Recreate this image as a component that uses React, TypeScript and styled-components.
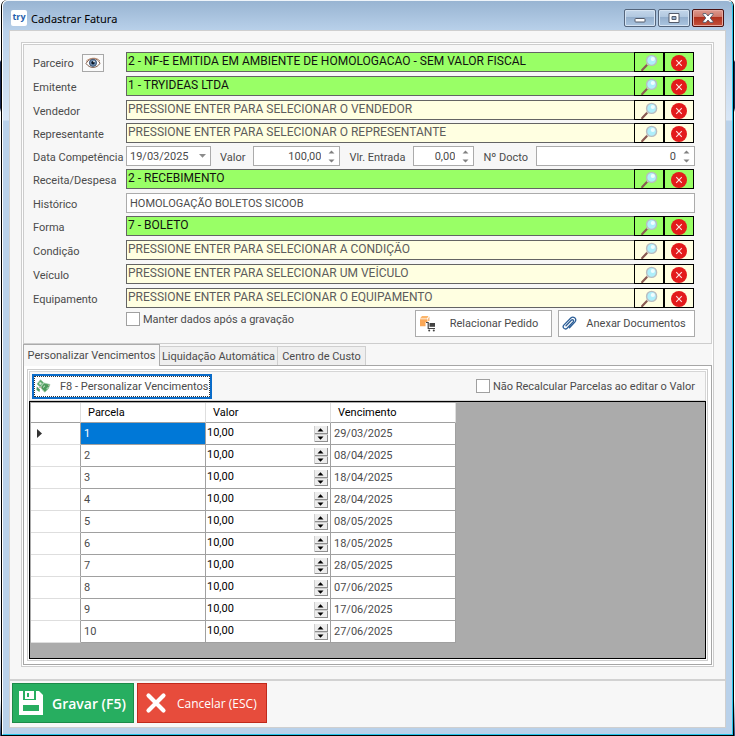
import React, { useState } from "react";
import styled, { createGlobalStyle, css } from "styled-components";

const GlobalStyle = createGlobalStyle`
  *, *::before, *::after { box-sizing: border-box; }
  body {
    margin: 0;
    background: linear-gradient(#ffffff 0, #ffffff 60px, #16264e 62px, #16264e 108px, #ffffff 112px, #ffffff 700px, #2f4f80 734px);
    font-family: Roboto, "Liberation Sans", sans-serif;
    font-size: 11px;
    color: #4b4b4b;
  }
  button, input { font: inherit; color: inherit; margin: 0; padding: 0; }
`;

/* ---------- window ---------- */

const Desktop = styled.div`
  min-height: 100vh;
  padding: 0 1px 1px;
  display: flex;
`;

const Frame = styled.div`
  flex: 1;
  min-width: 0;
  display: flex;
  border: solid #000;
  border-width: 0 1px 1px;
  border-radius: 6px 6px 0 0;
  overflow: hidden;
`;

const FrameInner = styled.div`
  flex: 1;
  min-width: 0;
  display: flex;
  flex-direction: column;
  padding: 0 6px 6px;
  border: 1px solid #25c3ea;
  border-top-color: #eef4fa;
  border-left-color: #ffffff;
  border-radius: 6px 6px 0 0;
  background: linear-gradient(#98b4d2 0, #b9d1ea 30px, #d8e6f6 119px, #b9d1ea 120px);
`;

const TitleBar = styled.header`
  height: 29px;
  flex: none;
  display: flex;
  align-items: flex-start;
  padding-left: 2px;
`;

const AppBadge = styled.span`
  width: 16px;
  height: 16px;
  margin-top: 9px;
  border-radius: 2px;
  background: #fff;
  color: #1f5fae;
  font: 700 9px/14px "Open Sans", sans-serif;
  text-align: center;
`;

const Title = styled.h1`
  flex: 1;
  margin: 9px 0 0 4px;
  font: 400 11px/18px "Noto Sans", sans-serif;
  color: #000;
`;

const CaptionButtons = styled.div`
  display: flex;
  gap: 2px;
  margin: 8px 2px 0 0;
`;

const CaptionButton = styled.button<{ $close?: boolean }>`
  width: 32px;
  height: 18px;
  display: grid;
  place-items: center;
  border: 1px solid ${(p) => (p.$close ? "#4a1212" : "#54657c")};
  border-radius: 2px;
  box-shadow: inset 0 0 0 1px ${(p) => (p.$close ? "#e7a99f" : "#d5e3f2")};
  background: ${(p) =>
    p.$close
      ? "linear-gradient(#dd9a8f 0, #cd7566 45%, #b0301c 46%, #c4523d 100%)"
      : "linear-gradient(#c3d6ea 0, #b0c7df 45%, #94afcd 46%, #abc5e0 100%)"};
`;

const Client = styled.main`
  flex: 1;
  display: flex;
  flex-direction: column;
  border: 1px solid #cfcfcf;
  background: #f7f7f7;
`;

const Group = styled.section`
  flex: 1;
  display: flex;
  flex-direction: column;
  margin: 11px 11px 12px;
  padding: 1px;
  border: 1px solid #cdcdcd;
  background: #fff;
`;

/* ---------- form ---------- */

const Form = styled.form`
  padding: 7px 16px 6px 9px;
  border: 1px solid #cdcdcd;
  background: #f7f7f7;
`;

const Row = styled.div<{ $tight?: boolean }>`
  height: 20px;
  margin-bottom: ${(p) => (p.$tight ? 3 : 4)}px;
  display: flex;
  align-items: center;
`;

const LabelCell = styled.div`
  flex: none;
  width: 93px;
  height: 20px;
  display: flex;
  align-items: center;
  gap: 8px;
  padding-top: 2px;
  white-space: nowrap;
`;

const InlineLabel = styled.label`
  flex: none;
  padding: 2px 8px 0 9px;
  white-space: nowrap;
`;

const EyeButton = styled.button`
  width: 22px;
  height: 18px;
  display: grid;
  place-items: center;
  border: 1px solid #a8a8a8;
  background: #fafafa;
`;

const Lookup = styled.div<{ $filled?: boolean }>`
  flex: 1;
  min-width: 0;
  height: 20px;
  display: flex;
  margin-right: 1px;
  background: ${(p) => (p.$filled ? "#99ff66" : "#ffffe1")};
  color: ${(p) => (p.$filled ? "#111" : "#5c5c5c")};
`;

const LookupInput = styled.input`
  flex: 1;
  min-width: 0;
  padding: 0 1px 3px;
  border: 1px solid #646464;
  border-right: 0;
  background: transparent;
  font-size: 12px;
  outline: none;
  &::placeholder { color: #5c5c5c; opacity: 1; }
`;

const LookupButton = styled.button`
  flex: none;
  width: 30px;
  display: flex;
  align-items: flex-end;
  justify-content: center;
  border: 1px solid #000;
  background: transparent;
`;

const TextInput = styled.input`
  flex: 1;
  min-width: 0;
  height: 20px;
  padding: 0 3px;
  border: 1px solid #ababab;
  background: #fff;
  outline: none;
`;

const Box = styled.div<{ $width?: number }>`
  ${(p) => (p.$width ? css`flex: none; width: ${p.$width}px;` : css`flex: 1; min-width: 0;`)}
  height: 20px;
  display: flex;
  border: 1px solid #ababab;
  background: #fff;
`;

const BoxInput = styled.input<{ $right?: boolean }>`
  flex: 1;
  min-width: 0;
  width: 0;
  padding: 0 3px;
  border: 0;
  background: transparent;
  text-align: ${(p) => (p.$right ? "right" : "left")};
  outline: none;
`;

const BoxButton = styled.button`
  flex: none;
  width: 15px;
  display: grid;
  place-items: center;
  border: 0;
  background: transparent;
`;

const FormFooter = styled.div`
  display: flex;
  gap: 6px;
  margin: -2px 0 0 93px;
`;

const Check = styled.label`
  display: flex;
  align-items: center;
  gap: 3px;
  white-space: nowrap;
`;

const CheckBox = styled.input`
  appearance: none;
  width: 14px;
  height: 14px;
  border: 1px solid #a0a0a0;
  background: #fff;
  &:checked { box-shadow: inset 0 0 0 3px #fff; background: #555; }
`;

const FooterCheck = styled(Check)`
  flex: 1;
  height: 18px;
`;

const ActionButton = styled.button`
  width: 137px;
  height: 27px;
  display: flex;
  align-items: center;
  border: 1px solid #ababab;
  background: #fff;
  padding: 0 3px;
  svg { flex: none; }
  span { flex: 1; text-align: center; white-space: nowrap; padding-left: 4px; }
`;

/* ---------- tabs ---------- */

const TabList = styled.div`
  display: flex;
  align-items: flex-end;
  background: #f7f7f7;
`;

const Tab = styled.button<{ $active?: boolean; $width: number }>`
  width: ${(p) => p.$width}px;
  border: 1px solid #cfcfcf;
  border-bottom: 0;
  white-space: nowrap;
  ${(p) =>
    p.$active
      ? css`height: 22px; margin-bottom: -1px; position: relative; background: #f7f7f7; border-color: #ababab;`
      : css`height: 19px; border-left: 0; background: #efefef;`}
`;

const TabPage = styled.div`
  flex: 1;
  display: flex;
  flex-direction: column;
  padding: 3px;
  border: 1px solid #a6a6a6;
`;

const Panel = styled.div`
  flex: 1;
  display: flex;
  flex-direction: column;
  padding: 1px;
  border: 1px solid #cdcdcd;
`;

const Toolbar = styled.div`
  height: 30px;
  display: flex;
  align-items: center;
  justify-content: space-between;
  padding: 0 10px 0 2px;
  border: 1px solid #d6d6d6;
  background: #f7f7f7;
`;

const FocusButton = styled.button`
  width: 180px;
  height: 25px;
  display: flex;
  align-items: center;
  gap: 9px;
  padding: 0 2px;
  border: 2px solid #0a6cc9;
  outline: 1px dotted #333;
  outline-offset: -3px;
  background: #fff;
  white-space: nowrap;
  svg { flex: none; }
`;

/* ---------- grid ---------- */

const GridArea = styled.div`
  flex: 1;
  min-height: 258px;
  padding: 1px;
  border: 1px solid #000;
  background: #ababab;
`;

const Table = styled.table`
  width: 425px;
  table-layout: fixed;
  border-collapse: separate;
  border-spacing: 0;
  background: #fff;
`;

const HeadCell = styled.th<{ $width: number }>`
  width: ${(p) => p.$width}px;
  height: 20px;
  padding: 0 7px;
  border-right: 1px solid #dedede;
  border-bottom: 1px solid #a0a0a0;
  color: #000;
  font-weight: 400;
  text-align: left;
`;

const MarkerCell = styled.th`
  height: 22px;
  padding: 0 0 0 6px;
  border-right: 1px solid #a0a0a0;
  border-bottom: 1px solid #dedede;
  text-align: left;
  svg { display: block; }
`;

const Cell = styled.td<{ $selected?: boolean }>`
  height: 22px;
  padding: 0 3px;
  border-right: 1px solid #a0a0a0;
  border-bottom: 1px solid #a0a0a0;
  ${(p) => p.$selected && css`background: #0078d7; color: #fff;`}
`;

const ValueBox = styled.div`
  height: 19px;
  display: flex;
  margin: 0 -1px 0 -2px;
`;

const ValueInput = styled.input`
  flex: 1;
  min-width: 0;
  padding-bottom: 3px;
  border: 0;
  color: #000;
  outline: none;
`;

const MiniSpin = styled.button`
  align-self: center;
  width: 14px;
  height: 16px;
  border: 0;
  background: #ededed;
  svg { display: block; }
`;

/* ---------- bottom bar ---------- */

const BottomBar = styled.footer`
  display: flex;
  gap: 3px;
  padding: 2px 2px 4px;
  border-top: 2px solid #d2d2d2;
`;

const BigButton = styled.button<{ $danger?: boolean }>`
  height: 40px;
  width: ${(p) => (p.$danger ? 130 : 122)}px;
  display: flex;
  align-items: center;
  gap: 9px;
  padding: 0 6px;
  border: 1px solid ${(p) => (p.$danger ? "#c0291b" : "#1c8a48")};
  background: ${(p) => (p.$danger ? "#e74c3c" : "#27ae60")};
  color: #fff;
  font: ${(p) => (p.$danger ? "400 12px" : "600 14px")} "Open Sans", sans-serif;
  white-space: nowrap;
`;

/* ---------- icons ---------- */

const MagnifierIcon = () => (
  <svg width="17" height="17" viewBox="0 0 17 17" aria-hidden="true">
    <path d="M1.2 16 6.4 10.6" stroke="#8a5a52" strokeWidth="2.2" strokeLinecap="round" />
    <path d="M6 11 7.5 9.5" stroke="#c9c9c9" strokeWidth="1.4" />
    <circle cx="10.6" cy="6.4" r="5" fill="#aeeffb" stroke="#b9bdc0" strokeWidth="1.4" />
    <circle cx="11.8" cy="5" r="2.1" fill="#effdff" />
  </svg>
);

const ClearIcon = () => (
  <svg width="16" height="16" viewBox="0 0 16 16" aria-hidden="true">
    <circle cx="8" cy="8" r="8" fill="#e31b1b" />
    <path d="M5.2 5.2 10.8 10.8M10.8 5.2 5.2 10.8" stroke="#ffe3e3" strokeWidth="1.1" />
  </svg>
);

const EyeIcon = () => (
  <svg width="16" height="12" viewBox="0 0 16 12" aria-hidden="true">
    <path d="M1 6.5C3.5 2.5 6 1.6 8.4 1.6c3 0 5 1.6 6.6 4.6-1.700 2.900-4 4.200-7 4.200-2.800 0-5-1.300-7-3.900Z" fill="#fff" stroke="#7d5a48" strokeWidth="1" />
    <path d="M1 4.500C4 .8 11.500-.3 15 4" fill="none" stroke="#b98a70" strokeWidth="1" />
    <circle cx="8" cy="5.800" r="3.600" fill="#6f8fb3" stroke="#2a3f5c" strokeWidth=".8" />
    <circle cx="8" cy="5.800" r="1.700" fill="#0d1726" />
    <circle cx="9" cy="4.600" r=".8" fill="#fff" />
  </svg>
);

const SpinIcon = () => (
  <svg width="7" height="13" viewBox="0 0 7 13" aria-hidden="true">
    <path d="M.5 3.500 3.500.5l3 3ZM.5 9.500l3 3 3-3Z" fill="#808080" />
  </svg>
);

const DropIcon = () => (
  <svg width="7" height="4" viewBox="0 0 7 4" aria-hidden="true">
    <path d="M0 0h7L3.500 3.800Z" fill="#8c8c8c" />
  </svg>
);

const MiniSpinIcon = () => (
  <svg width="14" height="16" viewBox="0 0 14 16" aria-hidden="true">
    <path d="M0 7.500h14M0 15.500h14M13.500 0v16" stroke="#8f8f8f" />
    <path d="M.5 0v16M0 8.500h14" stroke="#cfcfcf" />
    <path d="M3.500 5.500h6L6.500 2.200ZM3.500 10.500h6L6.500 13.800Z" fill="#000" />
  </svg>
);

const OrderIcon = () => (
  <svg width="17" height="17" viewBox="0 0 17 17" aria-hidden="true">
    <path d="M1 3.500 3 1h6.500L8 3.500Z" fill="#fbb56b" />
    <path d="M9 3.500 10.500 1.500V6H9Z" fill="#f7b87c" />
    <path d="M1 4.300h7.500V7H6.500v4.200H1Z" fill="#fba857" />
    <path d="M7 7.500h2.200v6H16" fill="none" stroke="#444" strokeWidth="1.200" />
    <path d="M10.500 8H16v3.800h-5.500Z" fill="#444" />
    <circle cx="10.200" cy="15.500" r="1" fill="#444" />
    <circle cx="14.800" cy="15.500" r="1" fill="#444" />
  </svg>
);

const ClipIcon = () => (
  <svg width="15" height="15" viewBox="0 0 15 15" fill="none" stroke="#2d5f98" strokeWidth="1.300" strokeLinecap="round" aria-hidden="true">
    <path d="M4 9.800 9.300 4.300c1.400-1.300 3 .2 1.800 1.600l-6 6.300c-2 2-5.300-.5-3.300-3.100L8.800 2c2.500-2.300 6.500.6 4.200 3.900L7.500 11.800" />
  </svg>
);

const MoneyIcon = () => (
  <svg width="15" height="14" viewBox="0 0 15 14" aria-hidden="true">
    <path d="M1 5 4.500.8 7.500 3.500 4.200 8Z" fill="#58a869" stroke="#8fbf98" strokeWidth=".7" />
    <path d="M.8 7.500 4 10.500 3.500 13 .5 11Z" fill="#4f9a60" />
    <path d="M4.500 8.500 8 4l6 1.500-1.800 4.500-3.400 3.200Z" fill="#4d9b5d" stroke="#9ccaa4" strokeWidth=".7" />
    <circle cx="4.400" cy="4.500" r="1.200" fill="#d7ecd9" />
    <path d="m7 8.500 2-1.800M10.500 9.800l1.800-1.300M6 11l2 1.800" stroke="#d5ead8" strokeWidth="1" />
    <path d="m2.500 9 2-1 1.500 1.200M12 6l1 1" stroke="#d8a1a5" strokeWidth=".8" fill="none" />
  </svg>
);

const SaveIcon = () => (
  <svg width="24" height="24" viewBox="0 0 24 24" aria-hidden="true">
    <path fillRule="evenodd" d="M0 0h4v9h13V0h3l4 4v20H0ZM4 14v6h16v-6Z" fill="#fff" />
    <path fillRule="evenodd" d="M6 0h9v8H6ZM8 2v4h2V2Z" fill="#fff" />
  </svg>
);

const CancelIcon = () => (
  <svg width="24" height="24" viewBox="0 0 24 24" aria-hidden="true">
    <path d="M4.500 4.500 19.500 19.500M19.500 4.500 4.500 19.500" stroke="#fff" strokeWidth="4.200" strokeLinecap="round" />
  </svg>
);

/* ---------- composed parts ---------- */

type LookupRowProps = {
  id: string;
  label: string;
  value?: string;
  placeholder?: string;
  tight?: boolean;
  extra?: React.ReactNode;
};

const LookupRow = ({ id, label, value, placeholder, tight, extra }: LookupRowProps) => (
  <Row $tight={tight}>
    <LabelCell>
      <label htmlFor={id}>{label}</label>
      {extra}
    </LabelCell>
    <Lookup $filled={!!value}>
      <LookupInput id={id} defaultValue={value} placeholder={placeholder} />
      <LookupButton type="button" aria-label={`Pesquisar ${label}`}>
        <MagnifierIcon />
      </LookupButton>
      <LookupButton type="button" aria-label={`Limpar ${label}`}>
        <ClearIcon />
      </LookupButton>
    </Lookup>
  </Row>
);

const Spinner = ({ id, value, width }: { id: string; value: string; width?: number }) => (
  <Box $width={width}>
    <BoxInput id={id} defaultValue={value} $right />
    <BoxButton type="button" aria-label="Ajustar valor">
      <SpinIcon />
    </BoxButton>
  </Box>
);

const dueDates = [
  "29/03/2025", "08/04/2025", "18/04/2025", "28/04/2025", "08/05/2025",
  "18/05/2025", "28/05/2025", "07/06/2025", "17/06/2025", "27/06/2025",
];

const tabs = [
  { name: "Personalizar Vencimentos", width: 137 },
  { name: "Liquidação Automática", width: 118 },
  { name: "Centro de Custo", width: 88 },
];

export default function App() {
  const [tab, setTab] = useState(0);

  return (
    <>
      <GlobalStyle />
      <Desktop>
        <Frame>
          <FrameInner>
            <TitleBar>
              <AppBadge>try</AppBadge>
              <Title>Cadastrar Fatura</Title>
              <CaptionButtons>
                <CaptionButton aria-label="Minimizar">
                  <svg width="12" height="12" viewBox="0 0 12 12">
                    <rect x="1" y="6.500" width="10" height="3.500" rx=".8" fill="#fff" stroke="#535b6b" />
                  </svg>
                </CaptionButton>
                <CaptionButton aria-label="Maximizar">
                  <svg width="12" height="10" viewBox="0 0 12 10">
                    <path fillRule="evenodd" d="M1 .5h10v9H1ZM4 3.500v3h4v-3Z" fill="#fff" stroke="#535b6b" />
                  </svg>
                </CaptionButton>
                <CaptionButton $close aria-label="Fechar">
                  <svg width="12" height="10" viewBox="0 0 12 10">
                    <path d="M1 .6h3l2 2.400L8 .6h3v1L8.200 5 11 8.400v1H8L6 7 4 9.400H1v-1L3.800 5 1 1.600Z" fill="#fff" stroke="#535b6b" strokeWidth=".9" />
                  </svg>
                </CaptionButton>
              </CaptionButtons>
            </TitleBar>

            <Client>
              <Group>
                <Form onSubmit={(e) => e.preventDefault()}>
                  <LookupRow
                    id="parceiro"
                    label="Parceiro"
                    value="2 - NF-E EMITIDA EM AMBIENTE DE HOMOLOGACAO - SEM VALOR FISCAL"
                    extra={
                      <EyeButton type="button" aria-label="Visualizar parceiro">
                        <EyeIcon />
                      </EyeButton>
                    }
                  />
                  <LookupRow id="emitente" label="Emitente" value="1 - TRYIDEAS LTDA" />
                  <LookupRow id="vendedor" label="Vendedor" placeholder="PRESSIONE ENTER PARA SELECIONAR O VENDEDOR" tight />
                  <LookupRow id="representante" label="Representante" placeholder="PRESSIONE ENTER PARA SELECIONAR O REPRESENTANTE" tight />
                  <Row $tight>
                    <LabelCell>
                      <label htmlFor="data">Data Competência</label>
                    </LabelCell>
                    <Box $width={85}>
                      <BoxInput id="data" defaultValue="19/03/2025" />
                      <BoxButton type="button" aria-label="Abrir calendário">
                        <DropIcon />
                      </BoxButton>
                    </Box>
                    <InlineLabel htmlFor="valor">Valor</InlineLabel>
                    <Spinner id="valor" value="100,00" width={87} />
                    <InlineLabel htmlFor="entrada">Vlr. Entrada</InlineLabel>
                    <Spinner id="entrada" value="0,00" width={61} />
                    <InlineLabel htmlFor="docto">Nº Docto</InlineLabel>
                    <Spinner id="docto" value="0" />
                  </Row>
                  <LookupRow id="receita" label="Receita/Despesa" value="2 - RECEBIMENTO" />
                  <Row $tight>
                    <LabelCell>
                      <label htmlFor="historico">Histórico</label>
                    </LabelCell>
                    <TextInput id="historico" defaultValue="HOMOLOGAÇÃO BOLETOS SICOOB" />
                  </Row>
                  <LookupRow id="forma" label="Forma" value="7 - BOLETO" />
                  <LookupRow id="condicao" label="Condição" placeholder="PRESSIONE ENTER PARA SELECIONAR A CONDIÇÃO" />
                  <LookupRow id="veiculo" label="Veículo" placeholder="PRESSIONE ENTER PARA SELECIONAR UM VEÍCULO" />
                  <LookupRow id="equipamento" label="Equipamento" placeholder="PRESSIONE ENTER PARA SELECIONAR O EQUIPAMENTO" />
                  <FormFooter>
                    <FooterCheck>
                      <CheckBox type="checkbox" />
                      Manter dados após a gravação
                    </FooterCheck>
                    <ActionButton type="button">
                      <OrderIcon />
                      <span>Relacionar Pedido</span>
                    </ActionButton>
                    <ActionButton type="button">
                      <ClipIcon />
                      <span>Anexar Documentos</span>
                    </ActionButton>
                  </FormFooter>
                </Form>

                <TabList role="tablist">
                  {tabs.map((t, i) => (
                    <Tab key={t.name} role="tab" aria-selected={i === tab} $active={i === tab} $width={t.width} onClick={() => setTab(i)}>
                      {t.name}
                    </Tab>
                  ))}
                </TabList>

                <TabPage role="tabpanel">
                  <Panel>
                    <Toolbar>
                      <FocusButton type="button">
                        <MoneyIcon />
                        F8 - Personalizar Vencimentos
                      </FocusButton>
                      <Check>
                        <CheckBox type="checkbox" />
                        Não Recalcular Parcelas ao editar o Valor
                      </Check>
                    </Toolbar>
                    <GridArea>
                      <Table>
                        <thead>
                          <tr>
                            <HeadCell $width={50} aria-label="Linha" />
                            <HeadCell $width={125}>Parcela</HeadCell>
                            <HeadCell $width={125}>Valor</HeadCell>
                            <HeadCell $width={125}>Vencimento</HeadCell>
                          </tr>
                        </thead>
                        <tbody>
                          {dueDates.map((date, i) => (
                            <tr key={date}>
                              <MarkerCell scope="row">
                                {i === 0 && (
                                  <svg width="5" height="9" viewBox="0 0 5 9" aria-label="Linha atual">
                                    <path d="M0 0v9l5-4.500Z" fill="#333" />
                                  </svg>
                                )}
                              </MarkerCell>
                              <Cell $selected={i === 0}>{i + 1}</Cell>
                              <Cell>
                                <ValueBox>
                                  <ValueInput defaultValue="10,00" aria-label={`Valor da parcela ${i + 1}`} />
                                  <MiniSpin type="button" aria-label="Ajustar valor">
                                    <MiniSpinIcon />
                                  </MiniSpin>
                                </ValueBox>
                              </Cell>
                              <Cell>{date}</Cell>
                            </tr>
                          ))}
                        </tbody>
                      </Table>
                    </GridArea>
                  </Panel>
                </TabPage>
              </Group>

              <BottomBar>
                <BigButton>
                  <SaveIcon />
                  Gravar (F5)
                </BigButton>
                <BigButton $danger>
                  <CancelIcon />
                  Cancelar (ESC)
                </BigButton>
              </BottomBar>
            </Client>
          </FrameInner>
        </Frame>
      </Desktop>
    </>
  );
}
